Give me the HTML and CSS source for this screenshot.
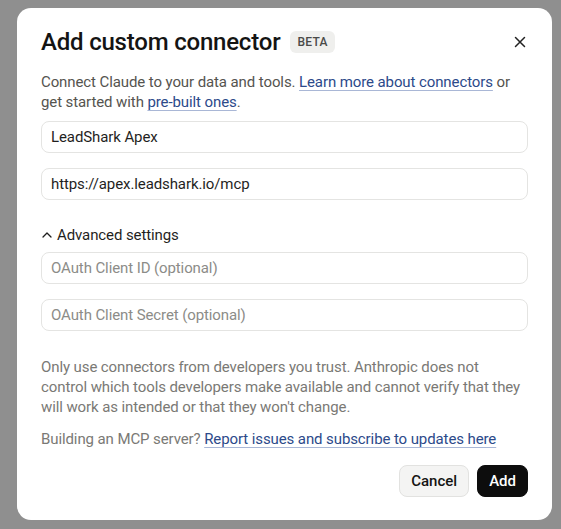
FILE: index.html
```
<!DOCTYPE html>
<html lang="en">
<head>
    <meta charset="UTF-8">
    <meta name="viewport" content="width=device-width, initial-scale=1.0">
    <title>Add custom connector</title>
    <link rel="stylesheet" href="styles.css">
</head>
<body>
    <div class="overlay">
        <div class="dialog">
            <div class="dialog-header">
                <h2 class="dialog-title">Add custom connector</h2>
                <span class="badge">BETA</span>
                <button class="close-btn" aria-label="Close">
                    <svg width="12" height="12" viewBox="0 0 12 12" fill="none" stroke="currentColor" stroke-width="1.5" stroke-linecap="round">
                        <path d="M1.5 1.5 L10.5 10.5 M10.5 1.5 L1.5 10.5"/>
                    </svg>
                </button>
            </div>

            <p class="intro">Connect Claude to your data and tools. <a href="#">Learn more about connectors</a> or get started with <a href="#">pre-built ones</a>.</p>

            <div class="fields">
                <input type="text" class="form-control" value="LeadShark Apex">
                <input type="text" class="form-control" value="https://apex.leadshark.io/mcp">
            </div>

            <button class="toggle">
                <svg width="12" height="12" viewBox="0 0 12 12" fill="none" stroke="currentColor" stroke-width="1.3" stroke-linecap="round" stroke-linejoin="round">
                    <path d="M2 8 L6 4 L10 8"/>
                </svg>
                Advanced settings
            </button>

            <div class="fields advanced">
                <input type="text" class="form-control" placeholder="OAuth Client ID (optional)">
                <input type="text" class="form-control" placeholder="OAuth Client Secret (optional)">
            </div>

            <p class="note">Only use connectors from developers you trust. Anthropic does not control which tools developers make available and cannot verify that they will work as intended or that they won't change.</p>
            <p class="note build">Building an MCP server? <a href="#">Report issues and subscribe to updates here</a></p>

            <div class="actions">
                <button class="btn btn-secondary">Cancel</button>
                <button class="btn btn-primary">Add</button>
            </div>
        </div>
    </div>
</body>
</html>
```
FILE: styles.css
```
* { margin: 0; padding: 0; box-sizing: border-box; }
body { font-family: Roboto, 'Liberation Sans', sans-serif; background: #8f8f8f; color: #141413; height: 529px; overflow: hidden; }
.overlay { padding: 8px 9px 0 17px; }
.dialog { background: #fff; border-radius: 14px; padding: 20px 24px 23px; }

.dialog-header { display: flex; align-items: center; height: 28px; }
.dialog-title { font-size: 24px; font-weight: 500; line-height: 28px; letter-spacing: -0.2px; }
.badge { margin-left: 10px; background: #efefed; color: #4a4a48; font-size: 12px; font-weight: 500; border-radius: 6px; padding: 0 7px; height: 22px; line-height: 22px; letter-spacing: 0.3px; }
.close-btn { margin-left: auto; margin-right: 2px; border: none; background: none; color: #222; display: flex; cursor: pointer; }

.intro { margin-top: 16px; font-size: 15px; line-height: 20px; color: #55544f; letter-spacing: -0.1px; }
a { color: #2c4a8a; text-decoration: underline; text-decoration-color: #a9b7d6; text-underline-offset: 3px; }

.fields { display: flex; flex-direction: column; gap: 15px; margin-top: 9px; }
.form-control { width: 100%; height: 32px; border: 1px solid #e4e4e2; border-radius: 8px; padding: 0 9px; font-family: inherit; font-size: 15px; letter-spacing: -0.1px; color: #1f1f1e; background: #fff; outline: none; }
.form-control::placeholder { color: #8c8c88; }

.toggle { display: flex; align-items: center; gap: 4px; margin-top: 25px; border: none; background: none; font-family: inherit; font-size: 15px; line-height: 20px; letter-spacing: -0.1px; color: #1f1f1e; cursor: pointer; }
.fields.advanced { margin-top: 7px; }

.note { margin-top: 26px; font-size: 15px; line-height: 20px; color: #7a7975; letter-spacing: -0.1px; }
.note.build { margin-top: 12px; }

.actions { display: flex; justify-content: flex-end; gap: 8px; margin-top: 16px; }
.btn { height: 32px; border-radius: 8px; font-family: inherit; font-size: 15px; font-weight: 500; cursor: pointer; padding: 0 11px; }
.btn-secondary { background: #f4f4f3; border: 1px solid #e2e2e0; color: #141413; }
.btn-primary { background: #0d0d0d; border: 1px solid #0d0d0d; color: #fff; }
```
